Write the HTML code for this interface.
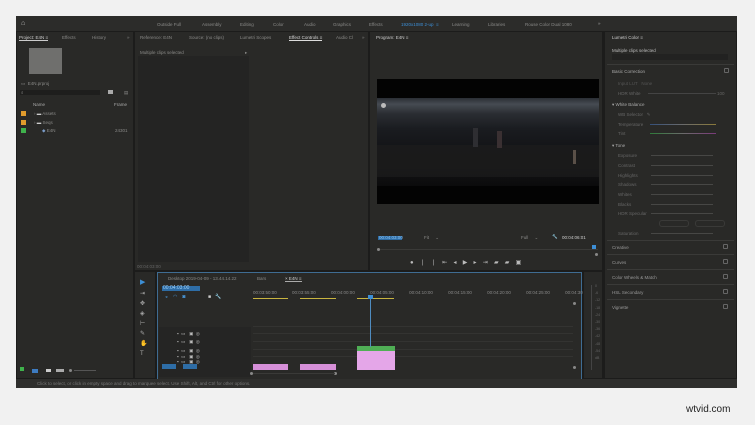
<!DOCTYPE html>
<html><head><meta charset="utf-8"><style>
*{margin:0;padding:0;box-sizing:border-box}
body{width:755px;height:425px;background:#f1f1f1;position:relative;overflow:hidden;font-family:"Liberation Sans",sans-serif;font-size:4.5px;color:#8a8a88}
.a{position:absolute}
.p{position:absolute;background:#292927}
.t{position:absolute;white-space:nowrap}
.hl{position:absolute;height:1px;background:#3a3a38}
.sl{position:absolute;height:1px;background:#555}
.kn{position:absolute;width:3px;height:3px;border-radius:50%;background:#888}
.bx{position:absolute;width:5px;height:5px;border:1px solid #666;border-radius:1px}
</style></head><body>
<div class="a" style="left:16px;top:16px;width:721px;height:372px;background:#1c1c1b"></div>
<div class="a" style="left:16px;top:16px;width:721px;height:15px;background:#2c2c2a"></div>
<div class="t" style="left:21px;top:20px;color:#bbb;font-size:7px">⌂</div>
<div class="t" style="left:157px;top:22px">Outside Full</div>
<div class="t" style="left:202px;top:22px">Assembly</div>
<div class="t" style="left:240px;top:22px">Editing</div>
<div class="t" style="left:273px;top:22px">Color</div>
<div class="t" style="left:304px;top:22px">Audio</div>
<div class="t" style="left:333px;top:22px">Graphics</div>
<div class="t" style="left:369px;top:22px">Effects</div>
<div class="t" style="left:401px;top:22px;color:#3d8fd6">1920x1080 2-up &nbsp;≡</div>
<div class="t" style="left:452px;top:22px">Learning</div>
<div class="t" style="left:488px;top:22px">Libraries</div>
<div class="t" style="left:525px;top:22px">Rouse Color Dual 1080</div>
<div class="t" style="left:598px;top:21px;color:#aaa">»</div>

<div class="p" style="left:17px;top:32px;width:116px;height:346px"></div>
<div class="t" style="left:19px;top:35px;color:#ccc;border-bottom:1px solid #ccc">Project: E4N ≡</div>
<div class="t" style="left:62px;top:35px">Effects</div>
<div class="t" style="left:92px;top:35px">History</div>
<div class="t" style="left:127px;top:35px">»</div>
<div class="a" style="left:29px;top:48px;width:33px;height:26px;background:#6f6f6d"></div>
<div class="t" style="left:21px;top:81px">▭ &nbsp;E4N.prproj</div>
<div class="a" style="left:20px;top:90px;width:80px;height:5px;background:#1e1e1d"></div>
<div class="t" style="left:21px;top:90px">⌕</div>
<div class="a" style="left:108px;top:90px;width:5px;height:4px;background:#aaa"></div>
<div class="t" style="left:124px;top:90px">▤</div>
<div class="t" style="left:33px;top:102px;color:#aaa">Name</div>
<div class="t" style="left:114px;top:102px;color:#aaa">Frame</div>
<div class="a" style="left:21px;top:111px;width:5px;height:5px;background:#e09b2c"></div>
<div class="a" style="left:21px;top:120px;width:5px;height:5px;background:#e09b2c"></div>
<div class="a" style="left:21px;top:128px;width:5px;height:5px;background:#3fb24c"></div>
<div class="t" style="left:34px;top:111px">› <span style="color:#ccc">▬</span> Assets</div>
<div class="t" style="left:34px;top:120px">› <span style="color:#ccc">▬</span> Seqs</div>
<div class="t" style="left:42px;top:128px"><span style="color:#7a9cc8">◆</span> E4N</div>
<div class="t" style="left:115px;top:128px">24301</div>
<div class="a" style="left:20px;top:367px;width:4px;height:4px;background:#3fb24c"></div>
<div class="a" style="left:32px;top:369px;width:6px;height:4px;background:#3d7bc0"></div>
<div class="a" style="left:46px;top:369px;width:5px;height:3px;background:#ccc"></div>
<div class="a" style="left:56px;top:369px;width:8px;height:3px;background:#aaa"></div>
<div class="kn" style="left:69px;top:369px"></div>
<div class="sl" style="left:74px;top:370px;width:22px"></div>

<div class="p" style="left:135px;top:32px;width:233px;height:238px"></div>
<div class="t" style="left:140px;top:35px">Reference: E4N</div>
<div class="t" style="left:189px;top:35px">Source: (no clips)</div>
<div class="t" style="left:240px;top:35px">Lumetri Scopes</div>
<div class="t" style="left:289px;top:35px;color:#ddd;border-bottom:1px solid #ddd">Effect Controls ≡</div>
<div class="t" style="left:336px;top:35px">Audio Cl</div>
<div class="t" style="left:362px;top:35px">»</div>
<div class="a" style="left:138px;top:56px;width:111px;height:206px;background:#242423"></div>
<div class="t" style="left:140px;top:50px">Multiple clips selected</div>
<div class="t" style="left:245px;top:50px">▸</div>
<div class="t" style="left:137px;top:264px;color:#666">00:04:03:00</div>

<div class="p" style="left:370px;top:32px;width:232px;height:238px"></div>
<div class="t" style="left:376px;top:35px;color:#ccc">Program: E4N ≡</div>
<div class="a" style="left:377px;top:79px;width:222px;height:125px;background:#030303"></div>
<div class="a" style="left:377px;top:98px;width:222px;height:88px;background:linear-gradient(180deg,#2a2e34 0%,#464b52 7%,#2a2d32 18%,#1a1c20 35%,#141518 55%,#161617 75%,#0b0b0c 100%)"></div>
<div class="a" style="left:377px;top:145px;width:222px;height:32px;background:rgba(28,28,28,.7)"></div>
<div class="a" style="left:381px;top:103px;width:5px;height:5px;border-radius:50%;background:#bbb"></div>
<div class="a" style="left:473px;top:128px;width:5px;height:19px;background:#2e2e32"></div>
<div class="a" style="left:497px;top:131px;width:5px;height:17px;background:#3a3032"></div>
<div class="a" style="left:573px;top:150px;width:3px;height:14px;background:#5a5048"></div>
<div class="a" style="left:378px;top:236px;width:24px;height:4px;background:#2e6da6"></div>
<div class="t" style="left:379px;top:235px;color:#8fc6f4">00:04:03:00</div>
<div class="t" style="left:424px;top:235px">Fit &nbsp; &nbsp; ⌄</div>
<div class="t" style="left:521px;top:235px">Full &nbsp; &nbsp; ⌄</div>
<div class="t" style="left:552px;top:234px;color:#ccc">🔧</div>
<div class="t" style="left:562px;top:235px;color:#ccc">00:04:06:01</div>
<div class="kn" style="left:377px;top:248px"></div>
<div class="sl" style="left:380px;top:249px;width:218px;background:#3a3a38"></div>
<div class="a" style="left:592px;top:245px;width:4px;height:4px;background:#3d8fd6"></div>
<div class="kn" style="left:595px;top:253px"></div>
<div class="t" style="left:410px;top:259px;color:#bbb;font-size:6px;letter-spacing:6.2px">●❘❘⇤◂▶▸⇥▰▰▣</div>

<div class="p" style="left:605px;top:32px;width:131px;height:346px"></div>
<div class="t" style="left:612px;top:35px;color:#ccc">Lumetri Color ≡</div>
<div class="t" style="left:612px;top:48px;color:#bbb">Multiple clips selected</div>
<div class="a" style="left:612px;top:54px;width:116px;height:6px;background:#222221"></div>
<div class="hl" style="left:607px;top:64px;width:127px"></div>
<div class="t" style="left:612px;top:69px;color:#aaa">Basic Correction</div>
<div class="bx" style="left:724px;top:68px"></div>
<div class="t" style="left:618px;top:81px;color:#555">Input LUT &nbsp; None</div>
<div class="t" style="left:618px;top:91px;color:#666">HDR White</div>
<div class="sl" style="left:648px;top:93px;width:68px;background:#444"></div>
<div class="t" style="left:717px;top:91px;color:#666">100</div>
<div class="t" style="left:612px;top:102px;color:#aaa">▾ White Balance</div>
<div class="t" style="left:618px;top:112px;color:#666">WB Selector &nbsp; ✎</div>
<div class="t" style="left:618px;top:122px;color:#666">Temperature</div>
<div class="a" style="left:650px;top:124px;width:66px;height:1px;background:linear-gradient(90deg,#35507a,#6b6b6b,#8a7a3a)"></div>
<div class="t" style="left:618px;top:131px;color:#666">Tint</div>
<div class="a" style="left:650px;top:133px;width:66px;height:1px;background:linear-gradient(90deg,#2f7a3a,#6b6b6b,#7a3a7a)"></div>
<div class="t" style="left:612px;top:143px;color:#aaa">▾ Tone</div>
<div class="t" style="left:618px;top:153px;color:#666">Exposure</div>
<div class="t" style="left:618px;top:163px;color:#666">Contrast</div>
<div class="t" style="left:618px;top:173px;color:#666">Highlights</div>
<div class="t" style="left:618px;top:182px;color:#666">Shadows</div>
<div class="t" style="left:618px;top:192px;color:#666">Whites</div>
<div class="t" style="left:618px;top:202px;color:#666">Blacks</div>
<div class="t" style="left:618px;top:211px;color:#666">HDR Specular</div>
<div class="sl" style="left:651px;top:155px;width:62px;background:#474745"></div>
<div class="sl" style="left:651px;top:165px;width:62px;background:#474745"></div>
<div class="sl" style="left:651px;top:175px;width:62px;background:#474745"></div>
<div class="sl" style="left:651px;top:184px;width:62px;background:#474745"></div>
<div class="sl" style="left:651px;top:194px;width:62px;background:#474745"></div>
<div class="sl" style="left:651px;top:204px;width:62px;background:#474745"></div>
<div class="sl" style="left:651px;top:213px;width:62px;background:#474745"></div>
<div class="a" style="left:659px;top:220px;width:30px;height:7px;border:1px solid #3a3a38;border-radius:3px"></div>
<div class="a" style="left:695px;top:220px;width:30px;height:7px;border:1px solid #3a3a38;border-radius:3px"></div>
<div class="t" style="left:618px;top:231px;color:#666">Saturation</div>
<div class="sl" style="left:651px;top:233px;width:62px;background:#474745"></div>
<div class="hl" style="left:607px;top:240px;width:127px"></div>
<div class="t" style="left:612px;top:245px;color:#999">Creative</div><div class="bx" style="left:723px;top:244px"></div>
<div class="hl" style="left:607px;top:254px;width:127px"></div>
<div class="t" style="left:612px;top:260px;color:#999">Curves</div><div class="bx" style="left:723px;top:259px"></div>
<div class="hl" style="left:607px;top:269px;width:127px"></div>
<div class="t" style="left:612px;top:275px;color:#999">Color Wheels &amp; Match</div><div class="bx" style="left:723px;top:274px"></div>
<div class="hl" style="left:607px;top:284px;width:127px"></div>
<div class="t" style="left:612px;top:290px;color:#999">HSL Secondary</div><div class="bx" style="left:723px;top:289px"></div>
<div class="hl" style="left:607px;top:299px;width:127px"></div>
<div class="t" style="left:612px;top:305px;color:#999">Vignette</div><div class="bx" style="left:723px;top:304px"></div>

<div class="p" style="left:135px;top:272px;width:20px;height:106px"></div>
<div class="t" style="left:140px;top:278px;color:#3d8fd6;font-size:7px;line-height:10px">▶</div>
<div class="t" style="left:140px;top:289px;color:#aaa;font-size:6px;line-height:10px">⇥<br>✥<br>◈<br>⊢<br>✎<br>✋<br>T</div>

<div class="p" style="left:157px;top:272px;width:425px;height:108px;border:1px solid #3f6c92"></div>
<div class="t" style="left:168px;top:276px">Desktop 2019-04-09 - 13.44.14.22</div>
<div class="t" style="left:257px;top:276px">Bars</div>
<div class="t" style="left:285px;top:276px;color:#ccc;border-bottom:1px solid #aaa">× E4N ≡</div>
<div class="a" style="left:162px;top:286px;width:38px;height:5px;background:#2e6da6"></div>
<div class="t" style="left:163px;top:285px;color:#9fd0f8;font-size:5px">00:04:03:00</div>
<div class="t" style="left:165px;top:294px;color:#4a9be0;font-size:5px;letter-spacing:5px">◒◠◙</div>
<div class="t" style="left:208px;top:294px;color:#ccc;font-size:5px">■ &nbsp; 🔧</div>
<div class="a" style="left:159px;top:327px;width:92px;height:50px;background:#252524"></div>
<div class="t" style="left:177px;top:330px;color:#bbb;line-height:8px">▪ &nbsp;▭ &nbsp; ▣ &nbsp;◎<br>▪ &nbsp;▭ &nbsp; ▣ &nbsp;◎</div>
<div class="t" style="left:177px;top:348px;color:#bbb;line-height:5.5px">▪ &nbsp;▭ &nbsp; ▣ &nbsp;◎<br>▪ &nbsp;▭ &nbsp; ▣ &nbsp;◎<br>▪ &nbsp;▭ &nbsp; ▣ &nbsp;◎</div>
<div class="a" style="left:162px;top:364px;width:14px;height:5px;background:#2e6da6"></div>
<div class="a" style="left:183px;top:364px;width:14px;height:5px;background:#2e6da6"></div>
<div class="t" style="left:253px;top:290px;color:#888;word-spacing:14px">00:03:50:00 00:03:55:00 00:04:00:00 00:04:05:00 00:04:10:00 00:04:15:00 00:04:20:00 00:04:25:00 00:04:30</div>
<div class="a" style="left:253px;top:298px;width:35px;height:1px;background:#c8b440"></div>
<div class="a" style="left:300px;top:298px;width:36px;height:1px;background:#c8b440"></div>
<div class="a" style="left:357px;top:298px;width:37px;height:1px;background:#c8b440"></div>
<div class="hl" style="left:253px;top:326px;width:320px;background:#333331"></div>
<div class="hl" style="left:253px;top:333px;width:320px;background:#333331"></div>
<div class="hl" style="left:253px;top:341px;width:320px;background:#333331"></div>
<div class="hl" style="left:253px;top:349px;width:320px;background:#333331"></div>
<div class="hl" style="left:253px;top:356px;width:320px;background:#333331"></div>
<div class="a" style="left:253px;top:364px;width:35px;height:6px;background:#d68fd8"></div>
<div class="a" style="left:300px;top:364px;width:36px;height:6px;background:#d68fd8"></div>
<div class="a" style="left:357px;top:346px;width:38px;height:5px;background:#4fae55"></div>
<div class="a" style="left:357px;top:351px;width:38px;height:19px;background:#e4a6e8"></div>
<div class="a" style="left:368px;top:295px;width:5px;height:4px;background:#3d8fd6"></div>
<div class="a" style="left:370px;top:299px;width:1px;height:48px;background:#4f8cc0"></div>
<div class="kn" style="left:573px;top:302px"></div>
<div class="kn" style="left:573px;top:366px"></div>
<div class="kn" style="left:250px;top:372px"></div>
<div class="kn" style="left:334px;top:372px"></div>
<div class="sl" style="left:253px;top:373px;width:82px;background:#3a3a38"></div>

<div class="p" style="left:584px;top:272px;width:18px;height:106px"></div>
<div class="a" style="left:591px;top:285px;width:1px;height:85px;background:#444"></div>
<div class="t" style="left:595px;top:283px;color:#666;font-size:3.5px;line-height:7.2px">0<br>-6<br>-12<br>-18<br>-24<br>-30<br>-36<br>-42<br>-48<br>-54<br>dB</div>

<div class="a" style="left:16px;top:379px;width:721px;height:9px;background:#2f2f2d"></div>
<div class="t" style="left:37px;top:381px;color:#777">Click to select, or click in empty space and drag to marquee select. Use Shift, Alt, and Ctrl for other options.</div>

<div class="t" style="left:686px;top:404px;color:#222;font-size:10px">wtvid.com</div>
</body></html>
